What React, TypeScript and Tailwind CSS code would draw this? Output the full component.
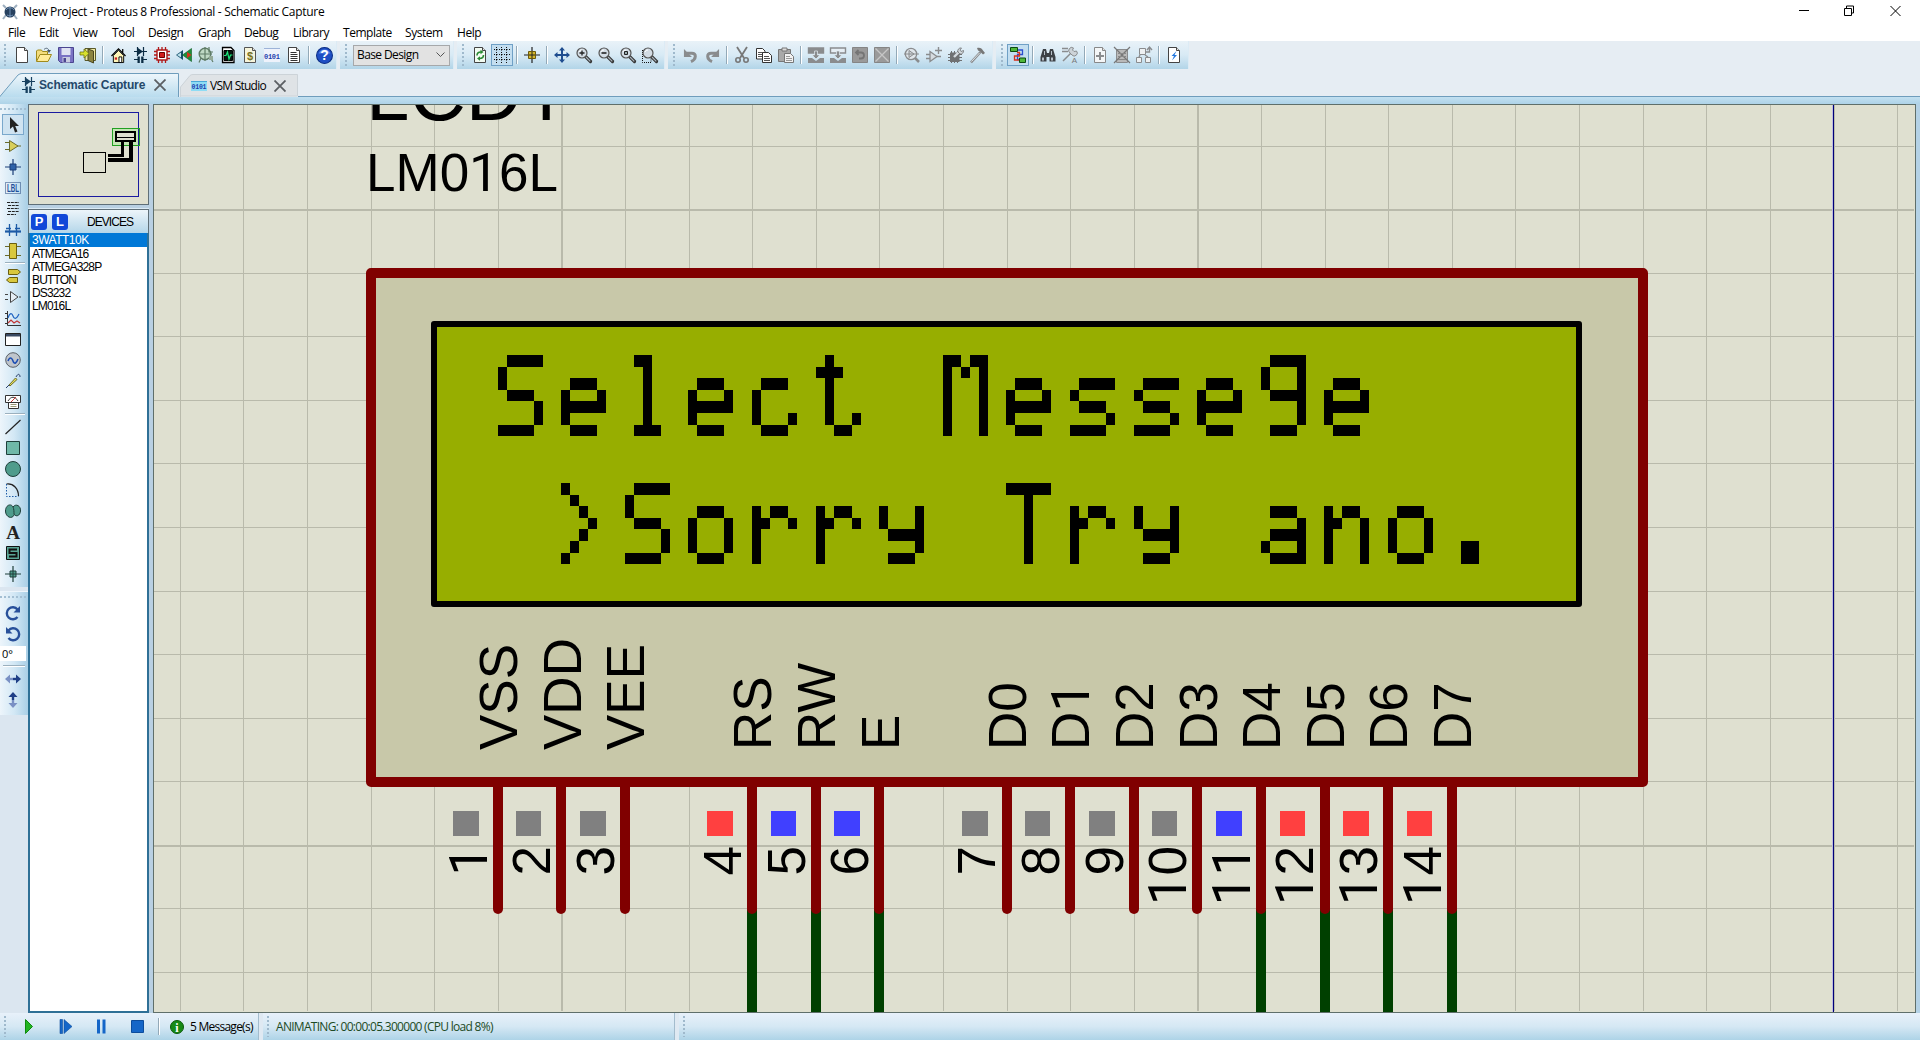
import React from "react";

const UI = "font-['Open_Sans',sans-serif] text-black whitespace-nowrap";

/* ---------- icon primitives (16 x 16 grid) ---------- */

function Ic({ children, size = 16 }: { children: React.ReactNode; size?: number }) {
  return (
    <svg width={size} height={size} viewBox="0 0 16 16" fill="none" className="block shrink-0 overflow-visible">
      {children}
    </svg>
  );
}

const page = "M2.5 .5h8l3 3v12h-11z";

function Sheet({ stroke = "#444", fill = "#fff", children }: { stroke?: string; fill?: string; children?: React.ReactNode }) {
  return (
    <Ic>
      <path d={page} fill={fill} stroke={stroke} />
      <path d="M10.5 .5v3h3" stroke={stroke} fill="#e4e4e4" />
      {children}
    </Ic>
  );
}

function Lens({ children, dotted }: { children?: React.ReactNode; dotted?: boolean }) {
  return (
    <Ic>
      {dotted && <path d="M.5 3v12.5H9V3" stroke="#111" strokeDasharray="1 1" />}
      <path d="M9.5 9.5l5 5" stroke="#333" strokeWidth="3.2" strokeLinecap="round" />
      <path d="M10 10l4.3 4.3" stroke="#aab4bc" strokeWidth="1.2" />
      <circle cx="6" cy="6" r="5" fill="#d3dce4" stroke="#555" strokeWidth="1.2" />
      <path d="M3 5a3 3 0 0 1 3-2" stroke="#fff" />
      {children}
    </Ic>
  );
}

function SchematicIcon({ c = "#15304a" }: { c?: string }) {
  return (
    <svg width="13" height="16" viewBox="0 0 13 16" fill="none" className="block shrink-0">
      <path d="M0 4.5h13M3.5 0v9M9.5 0v9M0 12.5h4M9 12.5h4" stroke={c} strokeWidth="1.2" />
      <path d="M4 1l5 3.500L4 8z" fill={c} />
      <path d="M3.500 9.500h2.300v6.500H3.500zM7.200 9.500h2.300v6.500H7.200z" fill={c} />
    </svg>
  );
}

const NewIcon = () => <Sheet />;
const OpenIcon = () => (
  <Ic>
    <path d="M.5 14V4l1-1h4l1 1.5h5V7" fill="#f3dc7c" stroke="#a08a1c" />
    <path d="M.5 14.5l3.5-7h11.5l-3.5 7z" fill="#ffeb98" stroke="#a08a1c" />
    <path d="M8 2.5c2-2 4-1.500 5 1" stroke="#567" />
    <path d="M11 3h4l-2 3z" fill="#456" />
  </Ic>
);
const SaveIcon = () => (
  <Ic>
    <path d="M.5 .5h15v15h-13l-2-2z" fill="#7a72c4" stroke="#4b4590" />
    <path d="M3.500 1h9v7h-9z" fill="#dfe2f2" />
    <path d="M4.500 10h7.500v5.500H4.500z" fill="#c9cce0" />
    <path d="M5.500 11h2.500v4H5.500z" fill="#4b4590" />
  </Ic>
);
const ExitIcon = () => (
  <Ic>
    <path d="M5 1.500h10.500v12H5z" fill="#efe9a0" stroke="#5a5a2a" />
    <path d="M8 2l5.500 2v12L8 13.500z" fill="#8b8440" stroke="#4a4620" />
    <path d="M0 5h4V2l5 4.500L4 11V8H0z" fill="#d8e02c" stroke="#6f7410" strokeWidth=".8" />
  </Ic>
);
const HomeIcon = () => (
  <Ic size={15}>
    <path d="M2.500 8v7.500h11V8L8 2.500z" fill="#fff6b8" stroke="#000" />
    <path d="M.500 8.500L8 1l7.500 7.500M12.500 1v4" stroke="#000" strokeWidth="1.300" />
    <path d="M4 10h2.500v2.500H4z" fill="#cc2222" />
    <path d="M8.500 9.500h3v6h-3z" fill="#fff" stroke="#000" />
  </Ic>
);
const ChipIcon = () => (
  <Ic>
    <path d="M4.500 0v16M8 0v16M11.500 0v16M0 4.500h16M0 8h16M0 11.500h16" stroke="#b01818" strokeWidth="1.300" />
    <path d="M3 3h10v10H3z" fill="#fff" stroke="#b01818" strokeWidth="1.400" />
    <path d="M5.500 5.500h5v5h-5z" fill="#d01c1c" stroke="#600" />
  </Ic>
);
const View3dIcon = () => (
  <Ic>
    <path d="M0 8l7-5v10z" fill="#15506a" />
    <path d="M1 8l4-2.500v5z" fill="#bfe3ee" />
    <path d="M15.500 1.500L6.500 8l9 6.500z" fill="#1f8f3a" stroke="#0b5c22" strokeWidth=".6" />
    <path d="M11 5l4.500 3-4.500 3z" fill="#d8321c" />
  </Ic>
);
const GerberIcon = () => (
  <Ic>
    <circle cx="7" cy="7" r="5.800" fill="#bfd9c4" stroke="#5f7c66" strokeWidth="1.400" />
    <path d="M7 0v14M1 7h13M11 0v5h4M3 11l-2 4.500M12 10l3 5" stroke="#5f7c66" strokeWidth="1.200" />
    <path d="M11 9h4v4h-4z" fill="#94aa98" />
  </Ic>
);
const ScopeIcon = () => (
  <Ic>
    <path d="M2.500 .500h8.500l3 3v12H2.500z" fill="#fff" stroke="#000" strokeWidth="1.300" />
    <path d="M4 3.500h8.500v10H4z" fill="#04170e" stroke="#000" />
    <path d="M4 8.500h2l1.500-3.500 1.500 7L10.500 8H12.500" stroke="#1de67d" strokeWidth="1.200" />
  </Ic>
);
const BomIcon = () => (
  <Sheet fill="#f6f4da" stroke="#555">
    <text x="8" y="12.500" fontSize="11" textAnchor="middle" fill="#77711c" fontFamily="Liberation Sans" fontWeight="700">$</text>
  </Sheet>
);
const CodeIcon = () => (
  <Ic>
    <path d="M0 1h16v14H0z" fill="#eef2fb" />
    <path d="M0 1.500h16" stroke="#9db3d8" />
    <text x="0" y="12" fontSize="7" textLength="16" fill="#1f3fae" fontFamily="Liberation Mono" fontWeight="700">0101</text>
  </Ic>
);
const NotesIcon = () => (
  <Sheet>
    <path d="M4.500 5.500h6M4.500 7.500h7M4.500 9.500h7M4.500 11.500h7M4.500 13.500h7" stroke="#333" />
  </Sheet>
);
const HelpIcon = () => (
  <Ic size={17}>
    <circle cx="8" cy="8" r="7.500" fill="#1f4fc4" stroke="#0d2f85" />
    <path d="M2.500 6a6 6 0 0 1 11 0z" fill="#5c87e8" />
    <text x="8" y="12.500" fontSize="13" textAnchor="middle" fill="#fff" fontFamily="Liberation Sans" fontWeight="700">?</text>
  </Ic>
);
const RefreshIcon = () => (
  <Sheet fill="#f2fbf2">
    <path d="M5 8.500c0-3 2-3.500 4-3.500M11.500 8c0 3-2 3.500-4 3.500" stroke="#2a8a34" strokeWidth="1.600" />
    <path d="M8.500 2.800v4.400L11.500 5zM8 9.300v4.400L5 11.500z" fill="#2a8a34" />
  </Sheet>
);
const GridIcon = () => (
  <Ic>
    <path d="M0 2.500h16M0 7.500h16M0 12.500h16" stroke="#111" strokeDasharray="1 1.500" />
    <path d="M2.500 0v16M7.500 0v16M12.500 0v16" stroke="#111" strokeDasharray="1 1.500" />
    <path d="M2 2h1v1H2zM7 2h1v1H7zM12 2h1v1h-1zM2 7h1v1H2zM7 7h1v1H7zM12 7h1v1h-1zM2 12h1v1H2zM7 12h1v1H7zM12 12h1v1h-1z" fill="#000" />
  </Ic>
);
const OriginIcon = () => (
  <Ic>
    <path d="M8 0v16M0 8h16" stroke="#222" strokeWidth="1.200" />
    <path d="M4.500 4.500h7v7h-7z" fill="#d5b72a" stroke="#6c5a0c" />
    <path d="M8 5v6M5 8h6" stroke="#222" />
  </Ic>
);
const PanIcon = () => (
  <Ic>
    <path d="M8 1v14M1 8h14" stroke="#1f4d8f" strokeWidth="2" />
    <path d="M8 0l3 3.500H5zM8 16l3-3.500H5zM0 8l3.500-3v6zM16 8l-3.500-3v6z" fill="#1f4d8f" />
  </Ic>
);
const G = "#8a8c8e";
const UndoIcon = ({ flip }: { flip?: boolean }) => (
  <Ic size={15}>
    <g transform={flip ? "translate(16 0) scale(-1 1)" : undefined}>
      <path d="M4 5.500h5.500c5 0 5 6.500-1 9" stroke={G} strokeWidth="3.200" />
      <path d="M1 1v8.500h8.500z" fill={G} />
    </g>
  </Ic>
);
const CutIcon = () => (
  <Ic>
    <path d="M3 0l7 11M13 0L6 11" stroke="#777" strokeWidth="1.800" />
    <circle cx="4" cy="13" r="2.200" stroke="#777" strokeWidth="1.600" />
    <circle cx="12" cy="13" r="2.200" stroke="#777" strokeWidth="1.600" />
  </Ic>
);
const CopyIcon = () => (
  <Ic>
    <path d="M.500 1.500h6l2.500 2.500v8h-8.500z" fill="#fff" stroke="#333" />
    <path d="M2 5.500h5M2 7.500h5M2 9.500h5" stroke="#555" />
    <path d="M6.500 5.500h6l3 3v7h-9z" fill="#fff" stroke="#333" />
    <path d="M8 9.500h5M8 11.500h6M8 13.500h6" stroke="#555" />
  </Ic>
);
const PasteIcon = () => (
  <Ic>
    <path d="M.500 2.500h12v12h-12z" fill="#a9a9a9" stroke="#777" />
    <path d="M4 1h5v3H4z" fill="#ddd" stroke="#777" />
    <path d="M6.500 6.500h6l3 3v6h-9z" fill="#f2f2f2" stroke="#777" />
    <path d="M8 9.500h4M8 11.500h6M8 13.500h6" stroke="#999" />
  </Ic>
);
const BlockIcon = ({ kind }: { kind: "copy" | "move" | "rotate" | "delete" }) => {
  if (kind === "copy" || kind === "move")
    return (
      <Ic>
        <path d="M.500 1h15v5h-15z" fill={kind === "copy" ? G : "#e6eef4"} stroke={G} strokeWidth="1.400" />
        <path d="M6.500 4h3v4H12L8 12 4 8h2.500z" fill={G} stroke="#e3edf4" strokeWidth=".7" />
        <path d="M0 11h4l4 3 4-3h4v5H0z" fill={G} />
      </Ic>
    );
  return (
    <Ic>
      <path d="M.500 .500h15v15H.500z" fill="#9a9a9a" stroke="#858585" />
      {kind === "rotate" ? (
        <path d="M4 5.500h5c4 0 4 6 0 6H7M6.500 3L4 5.500 6.500 8" stroke="#757575" strokeWidth="1.800" />
      ) : (
        <path d="M1.500 1.500l13 13M14.500 1.500l-13 13" stroke="#c6c6c6" strokeWidth="1.300" />
      )}
    </Ic>
  );
};
const PickIcon = () => (
  <Ic>
    <circle cx="7" cy="7" r="5.700" fill="#dfe5ea" stroke={G} strokeWidth="1.300" />
    <path d="M0 7h15M5 3.500l5 3.500-5 3.500z" fill="#cfd5da" stroke={G} />
    <path d="M11 11l4 4" stroke={G} strokeWidth="2.500" />
  </Ic>
);
const MakeIcon = () => (
  <Ic>
    <path d="M4 4.500l7 5-7 5z" fill="#d5dbe0" stroke={G} strokeWidth="1.300" />
    <path d="M0 7.500h4M0 11.500h4M11 9.500h4M9 3.500h7M12.500 0v7" stroke={G} strokeWidth="1.400" />
  </Ic>
);
const PackageIcon = () => (
  <Ic>
    <path d="M0 7.500h14M0 10.500h14M0 13.500h14M3.500 4v12M6.500 4v12M9.500 4v12" stroke="#6f7173" />
    <path d="M2 5.500h9.500V15H2z" fill="#6f7173" />
    <path d="M6 10l6-6" stroke="#d4dade" strokeWidth="2.400" />
    <path d="M10 5a3 3 0 0 1 3.500-4L12 3l1 1.500 2.500-1A3 3 0 0 1 12 7z" fill="#d4dade" stroke="#6f7173" strokeWidth=".8" />
  </Ic>
);
const HammerIcon = () => (
  <Ic>
    <path d="M1 15.500L10.500 5" stroke={G} strokeWidth="2.600" />
    <path d="M7 1c3-1 5 .500 6 2.500l2 2.500-2 1.500-3-3-2-1z" fill="#777" />
    <path d="M1.500 14.500l8-8.500" stroke="#dce2e6" />
  </Ic>
);
const WireIcon = () => (
  <Ic>
    <path d="M8 3h4.500v4.500H7.500v5H10" stroke="#2a4fd0" strokeWidth="1.300" />
    <path d="M10 5.500H7M9.500 5v4H4.500v4H10" stroke="#d8321c" strokeWidth="1.300" />
    <path d="M.500 .500h7v4h-7zM9.500 11h6v4.500h-6z" fill="#4fb83a" stroke="#0b4a10" />
  </Ic>
);
const FindIcon = () => (
  <Ic>
    <path d="M3 2h3l1 4h2l1-4h3l2.500 8v4.500h-6V10h-3v4.500h-6V10z" fill="#3d4146" />
    <path d="M2 10.500h2v3H2zM11 10.500h2v3h-2zM4 4h1v4H4zM11 4h1v4h-1z" fill="#b7c0c8" />
  </Ic>
);
const PropIcon = () => (
  <Ic>
    <path d="M0 1.500h6M0 4.500h6M1 14l8-8" stroke={G} strokeWidth="1.500" />
    <path d="M8 6a3 3 0 0 1 3.500-5l-1 2 1.500 1.500 2.500-.500A3 3 0 0 1 10 8z" fill="#cdd3d8" stroke={G} />
    <text x="12.500" y="16" fontSize="8" textAnchor="middle" fill="#777" fontFamily="Liberation Sans">A</text>
  </Ic>
);
const AddSheetIcon = () => (
  <Sheet stroke="#888" fill="#f4f6f7">
    <path d="M8 5v8M4 9h8" stroke={G} strokeWidth="2" />
  </Sheet>
);
const DelSheetIcon = () => (
  <Ic>
    <path d="M2.500 2.500h11v13h-11z" fill="#b9b9b9" stroke={G} />
    <path d="M0 0l16 16M16 0L0 16" stroke="#777" strokeWidth="1.200" />
    <path d="M4 6.500h8M4 9.500h8M4 12.500h8" stroke="#888" />
  </Ic>
);
const ParentIcon = () => (
  <Ic>
    <path d="M3.500 1.500h6v6h-6zM.500 10.500h5v5h-5zM9.500 10.500h5v5h-5z" fill="#eef1f3" stroke={G} />
    <path d="M4 8L3 10M9 8l3 2M10 5h3.500V1M11 3l2.500-3L16 3" stroke={G} strokeWidth="1.400" />
  </Ic>
);
const ErcIcon = () => (
  <Sheet fill="#fff" stroke="#444">
    <path d="M10.500 4L5.500 9H8l-2 4.500 5-5.500H8.500z" fill="#2378e0" />
  </Sheet>
);

/* ---------- top toolbar ---------- */

type Item = React.ReactNode | "|";

function Cell({ children, active }: { children: React.ReactNode; active?: boolean }) {
  return (
    <div
      className={
        active
          ? "flex h-[22px] w-[22px] shrink-0 items-center justify-center border border-[#6fa0c6] bg-[#c3def0]"
          : "flex h-[22px] w-[22px] shrink-0 items-center justify-center"
      }
    >
      {children}
    </div>
  );
}

function Grip() {
  return <div className="my-[3px] w-[2px] shrink-0 self-stretch bg-[repeating-linear-gradient(to_bottom,#9fb9cc_0_2px,transparent_2px_4px)]" />;
}

function Bar({ items, active = [], width, lead }: { items: Item[]; active?: number[]; width: string; lead: string }) {
  return (
    <div className={`flex h-7 shrink-0 items-center border-r border-[#dcebf5] bg-gradient-to-b from-[#e9f2f8] via-[#d8eaf5] to-[#b2d5e8] ${width}`}>
      <div className={`flex shrink-0 self-stretch ${lead}`}>
        <Grip />
      </div>
      {items.map((it, i) =>
        it === "|" ? (
          <div key={i} className="flex w-2 shrink-0 justify-center">
            <div className="h-[18px] w-[2px] border-l border-[#93a9b8] bg-white" />
          </div>
        ) : (
          <Cell key={i} active={active.includes(i)}>
            {it}
          </Cell>
        )
      )}
    </div>
  );
}

function TopToolbar() {
  return (
    <div className="flex h-7 gap-[3px] bg-[#e6edf3]">
      <Bar
        width="w-[337px]"
        lead="w-[11px] pl-1"
        items={[
          <NewIcon />, <OpenIcon />, <SaveIcon />, <ExitIcon />, "|",
          <HomeIcon />, <SchematicIcon c="#0b2c44" />, <ChipIcon />, <View3dIcon />, <GerberIcon />, <ScopeIcon />, <BomIcon />, <CodeIcon />, <NotesIcon />, "|",
          <HelpIcon />,
        ]}
      />
      <div className="flex h-7 w-[114px] shrink-0 items-center border-r border-[#dcebf5] bg-gradient-to-b from-[#e9f2f8] via-[#d8eaf5] to-[#b2d5e8]">
        <div className="flex w-[13px] self-stretch pl-[5px]">
          <Grip />
        </div>
        <div className="flex h-[21px] w-[97px] items-center justify-between border border-[#a6a8aa] bg-[#e2e2e2] pl-[3px] pr-1">
          <span className={`${UI} text-[12px] tracking-[-0.6px]`}>Base Design</span>
          <svg width="9" height="6" viewBox="0 0 9 6" fill="none">
            <path d="M.5 .5l4 4 4-4" stroke="#555" />
          </svg>
        </div>
      </div>
      <Bar
        width="w-[208px]"
        lead="w-3 pl-[5px]"
        active={[1]}
        items={[
          <RefreshIcon />, <GridIcon />, "|", <OriginIcon />, "|", <PanIcon />,
          <Lens><path d="M6 3.500v5M3.500 6h5" stroke="#222" strokeWidth="1.300" /></Lens>,
          <Lens><path d="M3.500 6h5" stroke="#222" strokeWidth="1.600" /></Lens>,
          <Lens><path d="M4.500 4.500h3v3h-3z" fill="#9aa" stroke="#222" /></Lens>,
          <Lens dotted />,
        ]}
      />
      <Bar
        width="w-[325px]"
        lead="w-[11px] pl-[5px]"
        items={[
          <UndoIcon />, <UndoIcon flip />, "|", <CutIcon />, <CopyIcon />, <PasteIcon />, "|",
          <BlockIcon kind="copy" />, <BlockIcon kind="move" />, <BlockIcon kind="rotate" />, <BlockIcon kind="delete" />, "|",
          <PickIcon />, <MakeIcon />, <PackageIcon />, <HammerIcon />,
        ]}
      />
      <Bar
        width="w-[193px]"
        lead="w-[11px] pl-[5px]"
        active={[0]}
        items={[<WireIcon />, "|", <FindIcon />, <PropIcon />, "|", <AddSheetIcon />, <DelSheetIcon />, <ParentIcon />, "|", <ErcIcon />]}
      />
    </div>
  );
}

/* ---------- title, menu, tabs ---------- */

function TitleBar() {
  return (
    <div className="flex h-[23px] items-center bg-white">
      <div className="flex w-[23px] justify-start pl-[2px]">
        <Ic>
          <path d="M1 1l3 3M15 1l-3 3M1 15l3-4M15 15l-3-4" stroke="#9fb0c0" strokeWidth="2" />
          <circle cx="8" cy="8" r="5.500" fill="#27415f" />
          <path d="M4 6c2-3 6-3 8 0M5 11c2 1 4 1 6 0M8 3v10" stroke="#6f8fb4" />
        </Ic>
      </div>
      <span className={`${UI} grow text-[12px] tracking-[-0.3px]`}>New Project - Proteus 8 Professional - Schematic Capture</span>
      <svg width="102" height="12" viewBox="0 0 102 12" fill="none" className="-mt-[2px] mr-[19px]" stroke="#000">
        <path d="M0 5.500h10M45.500 3.500h7v7h-7zM47.500 3v-2h7v7h-2M91.500 1l10 10M101.500 1l-10 10" />
      </svg>
    </div>
  );
}

const menus: [string, string][] = [
  ["File", "w-[31px]"],
  ["Edit", "w-[34px]"],
  ["View", "w-[39px]"],
  ["Tool", "w-[36px]"],
  ["Design", "w-[50px]"],
  ["Graph", "w-[46px]"],
  ["Debug", "w-[49px]"],
  ["Library", "w-[50px]"],
  ["Template", "w-[62px]"],
  ["System", "w-[52px]"],
  ["Help", "w-[40px]"],
];

function MenuBar() {
  return (
    <div className="flex h-[18px] items-center bg-white pt-[1px] pl-[8px]">
      {menus.map(([m, w]) => (
        <span key={m} className={`${UI} ${w} shrink-0 text-[12px] leading-[18px] tracking-[-0.45px]`}>
          {m}
        </span>
      ))}
    </div>
  );
}

function CloseX() {
  return (
    <svg width="12" height="12" viewBox="0 0 12 12" fill="none" className="shrink-0">
      <path d="M.5 .5l11 11M11.500 .5l-11 11" stroke="#5b5f63" strokeWidth="1.800" />
    </svg>
  );
}

function Tabs() {
  return (
    <div className="bg-[#e6edf3]">
      <div className="flex h-[28px] items-end">
        <div className="relative h-[24px] w-[179px] shrink-0">
          <svg width="179" height="24" viewBox="0 0 179 24" className="absolute inset-0">
            <defs>
              <linearGradient id="tab-on" x1="0" y1="0" x2="0" y2="1">
                <stop offset="0" stopColor="#eef6fb" />
                <stop offset="1" stopColor="#b9dcee" />
              </linearGradient>
            </defs>
            <path d="M-.5 24L18 2q2-1.500 4-1.500H178.500V24" fill="url(#tab-on)" stroke="#6f9dbc" />
          </svg>
          <div className="relative flex h-6 items-center pl-[22px]">
            <SchematicIcon c="#17405f" />
            <span className="ml-[4px] w-[115px] font-['Liberation_Sans',sans-serif] text-[12px] font-bold tracking-[-0.15px] whitespace-nowrap text-[#24486a]">
              Schematic Capture
            </span>
            <CloseX />
          </div>
        </div>
        <div className="relative h-[23px] w-[119px] shrink-0">
          <svg width="119" height="23" viewBox="0 0 119 23" className="absolute inset-0">
            <path d="M1.500 23V13L11 1.500q1-1 3-1H118.500V22H1.500" fill="#dfe3e6" stroke="#ccd3d8" />
          </svg>
          <div className="relative flex h-[23px] items-center pl-[12px]">
            <Ic>
              <path d="M0 3h16v10H0z" fill="#8fdcf4" />
              <path d="M0 3.500h16" stroke="#4aa9d8" />
              <text x=".5" y="11" fontSize="6.500" textLength="15" fill="#1f3fae" fontFamily="Liberation Mono" fontWeight="700">0101</text>
            </Ic>
            <span className={`${UI} ml-[3px] w-[64px] text-[12px] tracking-[-0.75px]`}>VSM Studio</span>
            <CloseX />
          </div>
        </div>
        <div className="h-px grow bg-[#6f9dbc]" />
      </div>
      <div className="h-[7px] bg-gradient-to-b from-[#c2e0f0] to-[#aed3e8]" />
    </div>
  );
}

/* ---------- left mode toolbar ---------- */

const T = "#4f9c8c";
const TS = "#1f3f3a";
const modeGroups: React.ReactNode[][] = [
  [
    <Ic><path d="M5 0v12l3-2.500 2 6 2.500-1-2.300-5.500H14z" fill="#222" /></Ic>,
    <Ic><path d="M0 4.500h4M0 11.500h4M12 8h4" stroke="#6b6b2b" /><path d="M4.500 2.500L13 8l-8.500 5.500z" fill="#d9cf5a" stroke="#6b6b2b" /></Ic>,
    <Ic><path d="M8 0v16M0 8h16" stroke="#1c3f78" strokeWidth="1.200" /><path d="M5 5h6v6H5z" fill="#2f62a8" stroke="#1c3f78" /></Ic>,
    <Ic><path d="M.500 2.500h15v11H.500z" stroke="#1c3f78" strokeDasharray="1 1" /><text x="2" y="12" fontSize="10" textLength="12" lengthAdjust="spacingAndGlyphs" fill="#1f4f9a" fontFamily="Liberation Sans" fontWeight="700">LBL</text></Ic>,
    <Ic><path d="M2 1.500h12M3 4.500h11M2 7.500h12M3 10.500h11M2 13.500h9" stroke="#222" strokeDasharray="3 .800" /></Ic>,
    <Ic><path d="M0 9.500h16" stroke="#1d5aa6" strokeWidth="2.200" /><path d="M1 6.500h5M4.500 2v12M11.500 2v12M10 6.500h5" stroke="#1d5aa6" strokeWidth="1.300" /></Ic>,
    <Ic><path d="M0 3.500h16M0 12.500h16" stroke="#6b6b2b" /><path d="M4.500 .500h7v15h-7z" fill="#d9c83e" stroke="#6b5f10" /></Ic>,
  ],
  [
    <Ic><path d="M3.500 1.500h9l3 2.500-3 2.500h-9zM12.500 9.500h-8L1.500 12l3 2.500h8z" fill="#d9c83e" stroke="#6b5f10" /></Ic>,
    <Ic><path d="M0 5.500h3M0 10.500h3M14 8h2" stroke="#444" /><path d="M5.500 2.500L13 8l-7.500 5.500z" fill="#e6eef5" stroke="#444" /></Ic>,
    <Ic><path d="M2.500 1v14.500H16M0 3.500h2M0 8.500h2M0 13.500h2" stroke="#333" /><path d="M3 8c2-6 4-5 5-2s3 4 6-2" stroke="#1f62c0" strokeWidth="1.200" /><path d="M3 13l3-3 3 3 3-2 3 2" stroke="#c03434" strokeWidth="1.200" /></Ic>,
    <Ic><path d="M.500 2.500h15v12H.500z" fill="#fff" stroke="#222" /><path d="M1 3h14v2.500H1z" fill="#3a4a63" /></Ic>,
    <Ic><circle cx="8" cy="8" r="7.300" fill="#bfc5cc" stroke="#5b6168" /><path d="M3 9c1.500-4 3.500-4 5 0s3.500 2 5-2" stroke="#1d4fb4" strokeWidth="1.600" /></Ic>,
    <Ic><path d="M1 15l3-3M11 4c2-4 4-3 4 0" stroke="#2a3f6a" /><path d="M4 12l6.500-7 1.500 1.500-7 6.500z" fill="#e6df5a" stroke="#6b6b2b" /></Ic>,
    <Ic><path d="M.500 1.500h15v7H.500zM3.500 8.500h10v6h-10z" fill="#fff" stroke="#333" /><path d="M3 7c3-5 7-5 10 0" stroke="#333" /><path d="M6 8l5-5" stroke="#c33" /><path d="M5.500 10.500h6M5.500 12.500h6" stroke="#997" /></Ic>,
  ],
  [
    <Ic><path d="M.500 15L15.500 1" stroke="#222" strokeWidth="1.200" /></Ic>,
    <Ic><path d="M1.500 1.500h13v13h-13z" fill="#6fb8a8" stroke={TS} /></Ic>,
    <Ic><circle cx="8" cy="8" r="7.500" fill={T} stroke={TS} /></Ic>,
    <Ic><path d="M1.500 2c7-1 12 5 12 12" stroke="#222" strokeWidth="1.200" /><path d="M1.500 2v12.500h12" stroke="#1d5aa6" strokeDasharray="1.500 1.500" /></Ic>,
    <Ic><path d="M8 4c3-4 8-1 7.500 4S11 14 9.500 11.500C7 17 .500 14 .500 8S6 0 8 4z" fill={T} stroke={TS} /><path d="M8 4c1 2 1 5 1 7.500" stroke={TS} /></Ic>,
    <Ic><text x="8" y="14.500" fontSize="19" textAnchor="middle" fill="#222" fontFamily="Liberation Serif" fontWeight="700">A</text></Ic>,
    <Ic><path d="M1.500 1.500h13v13h-13z" fill="#5aa595" stroke="#111" /><path d="M12 4.500H4.500v3.500h7v3.500H4" stroke="#111" strokeWidth="2" /></Ic>,
    <Ic><path d="M8 0v16M0 8h16" stroke={TS} strokeWidth="1.200" /><path d="M5 5h6v6H5z" fill={T} stroke={TS} /><path d="M8 5v6M5 8h6" stroke={TS} /></Ic>,
  ],
];

function Divider() {
  return (
    <div className="flex h-1 items-center px-[3px]">
      <div className="h-[2px] w-full border-t border-[#9bb0be] bg-white" />
    </div>
  );
}

function SideCell({ children, active }: { children: React.ReactNode; active?: boolean }) {
  return (
    <div
      className={
        active
          ? "flex h-[21px] w-[22px] items-center justify-center border border-[#7aa8cc] bg-[#cfe3f1]"
          : "flex h-[21px] w-[22px] items-center justify-center"
      }
    >
      {children}
    </div>
  );
}

const hgrip = "h-[2px] bg-[repeating-linear-gradient(to_right,#a3bfd3_0_2px,transparent_2px_4px)]";

function SideBar() {
  return (
    <div className="flex w-7 shrink-0 flex-col bg-[#dbe6f0]">
      <div className="h-[483px] w-7 bg-gradient-to-r from-[#edf5fb] via-[#d3e8f5] to-[#a9cfe6] pt-1">
        <div className={hgrip} />
        <div className="flex flex-col pl-[2px] pt-[4px]">
          {modeGroups.map((g, gi) => (
            <React.Fragment key={gi}>
              {gi > 0 && <Divider />}
              {g.map((ic, i) => (
                <SideCell key={i} active={gi === 0 && i === 0}>
                  {ic}
                </SideCell>
              ))}
            </React.Fragment>
          ))}
        </div>
      </div>
      <div className="mt-[4px] h-[124px] w-7 border-t border-[#edf5fb] bg-gradient-to-r from-[#edf5fb] via-[#d3e8f5] to-[#a9cfe6] pt-1">
        <div className={hgrip} />
        <div className="flex flex-col pl-[2px] pt-[4px]">
          <SideCell>
            <Ic><path d="M12.500 12a6 6 0 1 1 0-7.500" stroke="#28509a" strokeWidth="2.400" /><path d="M15 1v6.500H8.500z" fill="#28509a" /></Ic>
          </SideCell>
          <SideCell>
            <Ic><path d="M3.500 12a6 6 0 1 0 0-7.500" stroke="#28509a" strokeWidth="2.400" /><path d="M1 1v6.500h6.500z" fill="#28509a" /></Ic>
          </SideCell>
        </div>
        <div className="mt-[2px] flex h-[15px] w-[26px] items-center bg-white pl-[2px]">
          <span className={`${UI} text-[11px] leading-[15px]`}>0°</span>
        </div>
        <div className="mt-[3px]">
          <Divider />
        </div>
        <div className="flex flex-col pl-[2px]">
          <SideCell>
            <Ic><path d="M3 8h5" stroke="#7a90c4" strokeWidth="2.400" /><path d="M0 8l5-4.500v9z" fill="#7a90c4" /><path d="M8 8h5" stroke="#1f3f86" strokeWidth="2.400" /><path d="M16 8l-5-4.500v9z" fill="#1f3f86" /></Ic>
          </SideCell>
          <SideCell>
            <Ic><path d="M8 3v5" stroke="#1f3f86" strokeWidth="2.400" /><path d="M8 0L3.500 5h9z" fill="#1f3f86" /><path d="M8 8v5" stroke="#7a90c4" strokeWidth="2.400" /><path d="M8 16l-4.500-5h9z" fill="#7a90c4" /></Ic>
          </SideCell>
        </div>
      </div>
    </div>
  );
}

/* ---------- overview and device picker ---------- */

const devices = ["3WATT10K", "ATMEGA16", "ATMEGA328P", "BUTTON", "DS3232", "LM016L"];

function DevicePanel() {
  const arial = "font-['Liberation_Sans',sans-serif]";
  return (
    <div className="flex w-[125px] shrink-0 flex-col bg-[#b9d0e2]">
      <div className="h-[101px] w-[121px] border border-[#5f6f78] bg-[#dfe0d0]">
        <svg width="119" height="99" viewBox="29 105 119 99" fill="none" shapeRendering="crispEdges">
          <path d="M38.500 112.500h100v84h-100z" stroke="#1a1aa0" />
          <path d="M112.500 128.500h27v17h-27z" fill="#c4e6b4" stroke="#22a022" />
          <path d="M138.500 129v16" stroke="#1a1aa0" />
          <path d="M116 132h19v9h-19z" fill="#dfe0d0" stroke="#000" strokeWidth="2" />
          <path d="M117 137.500h18" stroke="#000" />
          <path d="M122.500 142v13H108" stroke="#000" strokeWidth="3" />
          <path d="M131 142v18h-23" stroke="#000" strokeWidth="4" />
          <path d="M83.500 152.500h22v20h-22z" stroke="#000" />
        </svg>
      </div>
      <div className="h-1 w-[121px] border-b border-[#dcebf5]" />
      <div className="flex h-[24px] w-[121px] items-center border border-b-0 border-[#5f6f78] bg-gradient-to-b from-[#edf5fa] to-[#b4d6e9] pl-[2px]">
        {["P", "L"].map((b) => (
          <span
            key={b}
            className={`mr-[5px] flex h-4 w-4 items-center justify-center rounded-[3px] bg-[#1148d8] ${arial} text-[13px] font-bold leading-none text-white`}
          >
            {b}
          </span>
        ))}
        <span className={`${arial} ml-[14px] text-[12px] leading-none tracking-[-0.95px] text-black`}>DEVICES</span>
      </div>
      <div className="w-[121px] grow border-2 border-t-0 border-[#2f7096] bg-white">
        {devices.map((d, i) => (
          <div
            key={d}
            className={`${arial} pl-[2px] text-[12px] whitespace-nowrap ${
              i === 0
                ? "h-[14px] bg-[#0078d7] leading-[15px] tracking-[-0.5px] text-white"
                : "h-[13px] leading-[14px] tracking-[-0.85px] text-black"
            }`}
          >
            {d}
          </div>
        ))}
      </div>
    </div>
  );
}

/* ---------- schematic sheet ---------- */

const dots: Record<string, string[]> = {
  S: [".####", "#....", "#....", ".###.", "....#", "....#", "####."],
  e: [".....", ".....", ".###.", "#...#", "#####", "#....", ".###."],
  l: [".##..", "..#..", "..#..", "..#..", "..#..", "..#..", ".###."],
  c: [".....", ".....", ".###.", "#....", "#....", "#...#", ".###."],
  t: [".#...", "###..", ".#...", ".#...", ".#...", ".#..#", "..##."],
  M: ["##.##", "#.#.#", "#...#", "#...#", "#...#", "#...#", "#...#"],
  s: [".....", ".....", ".####", "#....", ".###.", "....#", "####."],
  g: [".####", "#...#", "#...#", ".####", "....#", "....#", ".###."],
  ">": ["#....", ".#...", "..#..", "...#.", "..#..", ".#...", "#...."],
  o: [".....", ".....", ".###.", "#...#", "#...#", "#...#", ".###."],
  r: [".....", ".....", "#.##.", "##..#", "#....", "#....", "#...."],
  y: [".....", ".....", "#...#", "#...#", ".####", "....#", ".###."],
  T: ["#####", "..#..", "..#..", "..#..", "..#..", "..#..", "..#.."],
  a: [".....", ".....", ".###.", "....#", ".####", "#...#", ".####"],
  n: [".....", ".....", "#.##.", "##..#", "#...#", "#...#", "#...#"],
  ".": [".....", ".....", ".....", ".....", ".....", ".##..", ".##.."],
};

function LcdLine({ text, y }: { text: string; y: number }) {
  return (
    <g role="img" aria-label={text}>
      {text.split("").flatMap((ch, i) =>
        (dots[ch] ?? []).flatMap((row, r) =>
          row.split("").map((d, c) => {
            if (d !== "#") return null;
            const x0 = Math.round(497.600 + i * 63.6 + c * 9);
            const y0 = Math.round(y + r * 11.600);
            const y1 = Math.round(y + (r + 1) * 11.600);
            return <rect key={`${i}-${r}-${c}`} x={x0} y={y0} width={9} height={y1 - y0} fill="#000" />;
          })
        )
      )}
    </g>
  );
}

/* The figure one is set in Roboto, whose glyph has no foot serif. */
function Label({ text }: { text: string }) {
  return (
    <>
      {text.split(/(1)/).filter(Boolean).map((s, i) =>
        s === "1" ? (
          <tspan key={i} fontFamily="Roboto">
            {s}
          </tspan>
        ) : (
          <tspan key={i}>{s}</tspan>
        )
      )}
    </>
  );
}

const GREY = "#808080";
const RED = "#ff4040";
const BLUE = "#4040ff";

const pins: { n: number; name: string; slot: number; state: string; wired?: boolean }[] = [
  { n: 1, name: "VSS", slot: 0, state: GREY },
  { n: 2, name: "VDD", slot: 1, state: GREY },
  { n: 3, name: "VEE", slot: 2, state: GREY },
  { n: 4, name: "RS", slot: 4, state: RED, wired: true },
  { n: 5, name: "RW", slot: 5, state: BLUE, wired: true },
  { n: 6, name: "E", slot: 6, state: BLUE, wired: true },
  { n: 7, name: "D0", slot: 8, state: GREY },
  { n: 8, name: "D1", slot: 9, state: GREY },
  { n: 9, name: "D2", slot: 10, state: GREY },
  { n: 10, name: "D3", slot: 11, state: GREY },
  { n: 11, name: "D4", slot: 12, state: BLUE, wired: true },
  { n: 12, name: "D5", slot: 13, state: RED, wired: true },
  { n: 13, name: "D6", slot: 14, state: RED, wired: true },
  { n: 14, name: "D7", slot: 15, state: RED, wired: true },
];

function Sheet1() {
  const cols = Array.from({ length: 28 }, (_, i) => i);
  const rows = Array.from({ length: 15 }, (_, i) => i);
  return (
    <div className="h-[909px] w-[1763px] shrink-0 overflow-hidden border border-[#5f6f6a] bg-[#dfe0d0]">
      <svg width="1761" height="907" viewBox="154 105 1761 907" className="block" fontFamily="Liberation Sans, Arial, sans-serif">
        <g fill="#b9baab" shapeRendering="crispEdges">
          {cols.map((i) => (
            <rect key={i} x={Math.round(179.700 + i * 63.6)} y={105} width={i % 10 === 6 ? 2 : 1} height={906} />
          ))}
          {rows.map((i) => (
            <rect key={i} x={154} y={Math.floor(146 + i * 63.58)} width={1760} height={i % 10 === 1 ? 2 : 1} />
          ))}
        </g>
        <g shapeRendering="crispEdges">
          <rect x={1832} y={105} width={1} height={907} fill="#bcbce0" />
          <rect x={1833} y={105} width={1} height={907} fill="#000078" />
        </g>

        <text x={366} y={120} fontSize={78}><Label text="LCD1" /></text>
        <text x={366} y={191} fontSize={53}><Label text="LM016L" /></text>

        {pins.map((p) => {
          const x = Math.round(497.700 + p.slot * 63.6);
          return (
            <g key={p.n}>
              {p.wired && <rect x={x - 5} y={905} width={10} height={107} fill="#004000" />}
              <path d={`M${x} 782V909`} stroke="#800000" strokeWidth={10} strokeLinecap="round" />
              <rect x={x - 45} y={811} width={p.slot % 2 ? 25 : 26} height={25} fill={p.state} />
            </g>
          );
        })}

        <rect x={371} y={273} width={1272} height={509} fill="#c8c8a9" stroke="#800000" strokeWidth={10} strokeLinejoin="round" />
        <rect x={434} y={324} width={1145} height={280} fill="#97ae00" stroke="#000" strokeWidth={6} strokeLinejoin="round" />
        <g shapeRendering="crispEdges">
          <LcdLine text="Select Messege" y={355} />
          <LcdLine text=" >Sorry Try ano." y={483} />
        </g>

        {pins.map((p) => {
          const x = 497.700 + p.slot * 63.6;
          return (
            <g key={p.n} fontSize={53}>
              <text transform={`translate(${x + 19.200} 750) rotate(-90)`}><Label text={p.name} /></text>
              <text transform={`translate(${x - 11.200} 846) rotate(-90)`} textAnchor="end"><Label text={String(p.n)} /></text>
            </g>
          );
        })}
      </svg>
    </div>
  );
}

/* ---------- status bar ---------- */

function StatusBar() {
  const grad = "bg-gradient-to-b from-[#e8f1fa] via-[#d5e8f4] to-[#add3e7]";
  return (
    <div className="flex h-[27px] gap-1 bg-[#dfe9f2]">
      <div className={`flex w-[259px] items-center border-r border-[#a3bccd] pl-1 ${grad}`}>
        <Grip />
        <svg width="150" height="17" viewBox="0 0 150 17" className="ml-[16px] shrink-0">
          <path d="M3.500 1.500v14l7-7z" fill="#22b522" stroke="#0e8a0e" />
          <path d="M38 1.500h2.500v14H38zM42 1.500v14l8-7z" fill="#1566c8" stroke="#0c4c9c" strokeWidth=".6" />
          <path d="M75 1.500h3v14h-3zM80.500 1.500h3v14h-3z" fill="#1566c8" />
          <path d="M109.500 2.500h12v12h-12z" fill="#1566c8" stroke="#0c4c9c" />
          <path d="M136.500 0v17" stroke="#93a9b8" />
          <path d="M137.500 0v17" stroke="#fff" />
        </svg>
        <svg width="14" height="14" viewBox="0 0 14 14" className="-ml-[2px] shrink-0">
          <circle cx="7" cy="7" r="6.500" fill="#178a17" stroke="#0b5a0b" />
          <text x="7" y="11.500" fontSize="12" textAnchor="middle" fill="#fff" fontFamily="Liberation Serif" fontWeight="700">i</text>
        </svg>
        <span className={`${UI} ml-[6px] text-[12px] tracking-[-0.75px]`}>5 Message(s)</span>
      </div>
      <div className={`flex w-[412px] items-center border-r border-[#a3bccd] pl-1 ${grad}`}>
        <Grip />
        <span className="ml-[7px] font-['Open_Sans',sans-serif] text-[12px] tracking-[-0.71px] whitespace-nowrap text-[#1d4a24]">
          ANIMATING: 00:00:05.300000 (CPU load 8%)
        </span>
      </div>
      <div className={`flex grow items-center pl-1 ${grad}`}>
        <Grip />
      </div>
    </div>
  );
}

export default function App() {
  return (
    <div className="flex h-[1040px] w-[1920px] flex-col overflow-hidden bg-[#dfe9f2]">
      <TitleBar />
      <MenuBar />
      <TopToolbar />
      <Tabs />
      <div className="flex h-[909px] bg-[#b4d2e6]">
        <SideBar />
        <DevicePanel />
        <Sheet1 />
      </div>
      <StatusBar />
    </div>
  );
}
